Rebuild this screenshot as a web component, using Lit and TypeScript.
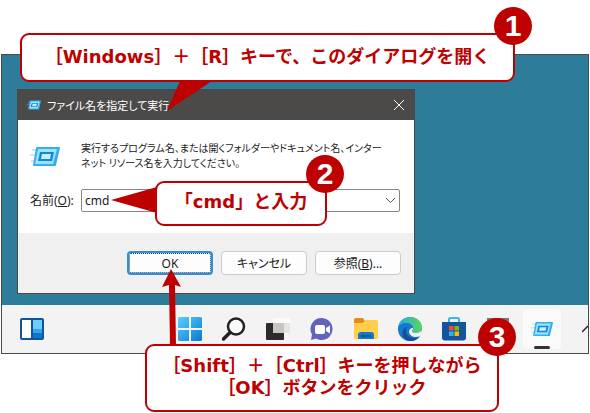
import { LitElement, html, css, svg } from "lit";
import { customElement, property } from "lit/decorators.js";

const runGlyph = svg`
  <path d="M2 4h7M0 9h7M1 15h5" stroke="#8fd0f5" stroke-width="1" />
  <path d="M7 1h22q1 0 1 1l-4 17q0 1-1 1H4q-1 0-1-1L6 2q0-1 1-1z" fill="#35aef0" />
  <path d="M8 3h19l-4 15H5z" fill="#9be3fc" />
  <path d="M10 6h14l-2 9H8z" fill="#1787d4" />
  <path d="M12 8h9l-1 5H11z" fill="#c4effd" />`;

@customElement("callout-box")
class CalloutBox extends LitElement {
  @property({ type: Number }) step = 1;

  static styles = css`
    :host {
      display: block;
      box-sizing: border-box;
      border: 2px solid #be0000;
      border-radius: 9px;
      background: #fff;
      color: #be0000;
      font: 700 18px/22px "DejaVu Sans", "Noto Sans CJK JP", sans-serif;
      text-align: center;
      white-space: nowrap;
    }
    .badge {
      position: absolute;
      top: -28px;
      right: -19px;
      width: 38px;
      height: 38px;
      border-radius: 50%;
      background: #be0000;
      color: #fff;
      font: 700 30px/38px "Liberation Sans", sans-serif;
    }
  `;

  render() {
    return html`<slot></slot><span class="badge">${this.step}</span>`;
  }
}

@customElement("run-dialog")
class RunDialog extends LitElement {
  static styles = css`
    :host {
      display: block;
      box-sizing: border-box;
      border: 1px solid #4a4846;
      background: #fff;
      color: #1b1b1b;
      font: 12px/15px "Noto Sans", "Noto Sans CJK JP", sans-serif;
      font-feature-settings: "palt";
    }
    .title {
      display: flex;
      align-items: center;
      gap: 6px;
      height: 30px;
      padding: 0 9px;
      background: #4c4a48;
      color: #fff;
    }
    .title h1 {
      flex: 1;
      margin: 0;
      font-size: 11px;
      font-weight: 400;
    }
    .close {
      display: flex;
      padding: 0;
      border: 0;
      background: none;
    }
    .body {
      display: grid;
      grid-template-columns: 51px 1fr;
      row-gap: 18px;
      align-items: center;
      padding: 21px 14px 21px 12px;
    }
    .body p {
      margin: 0;
      font-size: 10px;
      white-space: nowrap;
    }
    .combo {
      display: flex;
      box-sizing: border-box;
      height: 23px;
      border: 1px solid #868686;
      border-radius: 2px;
    }
    .combo input {
      flex: 1;
      min-width: 0;
      padding: 0 3px;
      border: 0;
      outline: 0;
      background: none;
      color: #1b1b1b;
      font: 12px/15px "Noto Sans", sans-serif;
    }
    .combo button {
      display: flex;
      align-items: center;
      padding: 0 3px;
      border: 0;
      background: none;
    }
    .foot {
      display: flex;
      justify-content: flex-end;
      gap: 8px;
      padding: 18px 13px;
      background: #f0f0f0;
    }
    .btn {
      width: 86px;
      height: 24px;
      padding: 0;
      border: 1px solid #cacaca;
      border-radius: 4px;
      background: #fdfdfd;
      color: #1b1b1b;
      font: 12px/15px "Noto Sans", "Noto Sans CJK JP", sans-serif;
      font-feature-settings: "palt";
    }
    .primary {
      border: 2px solid #2a8fdc;
      outline: 1px dotted #333;
      outline-offset: -3px;
    }
  `;

  render() {
    return html`
      <div class="title">
        <svg width="14" height="10" viewBox="0 0 30 21">${runGlyph}</svg>
        <h1>ファイル名を指定して実行</h1>
        <button class="close" aria-label="閉じる">
          <svg width="12" height="12" viewBox="0 0 12 12">
            <path d="M1 1l10 10M11 1L1 11" stroke="#fff" />
          </svg>
        </button>
      </div>
      <div class="body">
        <svg width="30" height="21" viewBox="0 0 30 21">${runGlyph}</svg>
        <p>実行するプログラム名、または開くフォルダーやドキュメント名、インター<br />ネット リソース名を入力してください。</p>
        <label for="name">名前(<u>O</u>):</label>
        <div class="combo">
          <input id="name" type="text" value="cmd" />
          <button aria-label="履歴">
            <svg width="11" height="7" viewBox="0 0 11 7">
              <path d="M1 1l4.500 4.500L10 1" fill="none" stroke="#555" />
            </svg>
          </button>
        </div>
      </div>
      <div class="foot">
        <button class="btn primary">OK</button>
        <button class="btn">キャンセル</button>
        <button class="btn">参照(<u>B</u>)...</button>
      </div>
    `;
  }
}

const icons = {
  widgets: svg`
    <rect x="0" y="1" width="24" height="22" rx="2" fill="#0e55a0" />
    <rect x="2" y="3" width="9" height="18" fill="#fff" />
    <rect x="13" y="3" width="9" height="9" fill="#6bcdf8" />
    <rect x="13" y="12" width="9" height="4" fill="#2fa3ec" />
    <rect x="13" y="16" width="9" height="5" fill="#1272ce" />`,
  start: svg`
    <linearGradient id="win" x1="0" y1="0" x2="1" y2="1">
      <stop offset="0" stop-color="#5bd0fa" /><stop offset="1" stop-color="#0878d4" />
    </linearGradient>
    <path d="M1.500 0H11v11H0V1.500Q0 0 1.500 0zM13 0h9.500Q24 0 24 1.500V11H13zM0 13h11v11H1.500Q0 24 0 22.500zM13 13h11v9.500q0 1.500-1.500 1.500H13z" fill="url(#win)" />`,
  search: svg`
    <circle cx="14" cy="9.500" r="8" fill="#fafafa" stroke="#222" stroke-width="2.500" />
    <path d="M8 15.500L1.500 22" stroke="#222" stroke-width="3.500" stroke-linecap="round" />`,
  tasks: svg`
    <rect x="0" y="6" width="18" height="17" rx="1" fill="#2b2b2b" />
    <rect x="7" y="1" width="17" height="15" rx="1" fill="#fbfbfb" />
    <rect x="7" y="6" width="11" height="10" fill="#c9c5c3" />
    <path d="M18 6h6v9q0 1-1 1h-5z" fill="#e4e4e4" />`,
  chat: svg`
    <path d="M12 1a11 11 0 1 1-6 20.500L1 23l1-5.500A11 11 0 0 1 12 1z" fill="#6264bb" />
    <rect x="5" y="8" width="10" height="9" rx="2" fill="#fff" />
    <path d="M16 11l4-2.500v8L16 14z" fill="#fff" />`,
  folder: svg`
    <path d="M0 2.500Q0 1 1.500 1H9l2 3v5H0z" fill="#e88a1a" />
    <path d="M0 6h9l2-3h11.500Q24 3 24 4.500v16q0 1.500-1.500 1.500h-21Q0 22 0 20.500z" fill="#ffcf4c" />
    <path d="M4 22v-4q0-3 3-3h10q3 0 3 3v4z" fill="#1278c8" />
    <path d="M7 19h10" stroke="#0c5699" stroke-width="2" />`,
  edge: svg`
    <linearGradient id="eg" x1="0" y1="0" x2="1" y2="0">
      <stop offset="0" stop-color="#28a9e6" /><stop offset="1" stop-color="#5bd55a" />
    </linearGradient>
    <circle cx="12" cy="12" r="12" fill="#1678cc" />
    <path d="M0 11C1 4 6 0 12 0c7 0 12 5 12 10 0 4-3 6-6 6-2 0-4-.5-4-2 0-1 1-1 1-3 0-3-3-5-7-5-4 0-7 2-8 5z" fill="url(#eg)" />
    <path d="M9 10c-3 5 1 11 7 11 3 0 5-1 6-2-2 3-5 5-10 5C6 24 3 18 5 13c1-2 3-3 4-3z" fill="#12509f" />
    <path d="M15 11c0 2-1 2-1 3 0 1.500 2 2 4 2 2.500 0 4.500-1 6-3 0 3-1 5-2 6-4 2-10 1-11-4 0-2 1-4 4-4z" fill="#f2f2f2" />`,
  store: svg`
    <path d="M7 6V2.500Q7 1 8.500 1h7Q17 1 17 2.500V6" fill="none" stroke="#37b5ee" stroke-width="2" />
    <path d="M0 5h24v15.500q0 3-3 3H3q-3 0-3-3z" fill="#14549e" />
    <path d="M7 9h4.500v4.500H7z" fill="#f25022" /><path d="M12.500 9H17v4.500h-4.500z" fill="#7fba00" />
    <path d="M7 14.500h4.500V19H7z" fill="#30aef0" /><path d="M12.500 14.500H17V19h-4.500z" fill="#ffb900" />`,
  window: svg`<rect x="1" y="1" width="22" height="22" fill="#77777b" />`,
};

@customElement("task-bar")
class TaskBar extends LitElement {
  static styles = css`
    :host {
      display: flex;
      align-items: center;
      height: 48px;
      padding-left: 8px;
      overflow: hidden;
      background: #f3f3f3;
    }
    button {
      display: flex;
      flex: none;
      align-items: center;
      justify-content: center;
      width: 44px;
      height: 40px;
      padding: 0;
      border: 0;
      background: none;
    }
    .apps {
      display: flex;
      margin-left: auto;
    }
    .active {
      flex-direction: column;
      justify-content: flex-end;
      gap: 9px;
      width: 38px;
      margin: 0 3px;
      border-radius: 4px;
      background: #fafafa;
    }
    .mark {
      width: 16px;
      height: 3px;
      border-radius: 2px;
      background: #333;
    }
    .tray {
      justify-content: flex-end;
      width: 24px;
    }
  `;

  icon(label: string, art: unknown) {
    return html`<button aria-label=${label}>
      <svg width="24" height="24" viewBox="0 0 24 24">${art}</svg>
    </button>`;
  }

  render() {
    return html`
      ${this.icon("ウィジェット", icons.widgets)}
      <div class="apps">
        ${this.icon("スタート", icons.start)}
        ${this.icon("検索", icons.search)}
        ${this.icon("タスク ビュー", icons.tasks)}
        ${this.icon("チャット", icons.chat)}
        ${this.icon("エクスプローラー", icons.folder)}
        ${this.icon("Edge", icons.edge)}
        ${this.icon("Store", icons.store)}
        ${this.icon("アプリ", icons.window)}
        <button class="active" aria-label="ファイル名を指定して実行">
          <svg width="22" height="16" viewBox="0 0 30 21">${runGlyph}</svg>
          <span class="mark"></span>
        </button>
      </div>
      <button class="tray" aria-label="その他">
        <svg width="6" height="8" viewBox="0 0 6 8">
          <path d="M0 7l6-6" stroke="#222" stroke-width="1.500" />
        </svg>
      </button>
    `;
  }
}

@customElement("app-root")
class AppRoot extends LitElement {
  static styles = css`
    :host {
      display: block;
      position: relative;
      box-sizing: border-box;
      min-height: 100vh;
      padding: 54px 1px 0;
      overflow: hidden;
      background: #fff;
    }
    .screen {
      border: 1px solid #4a4a4a;
      background: #2d7d9a;
    }
    .desktop {
      padding: 34px 15px 11px;
    }
    run-dialog {
      max-width: 398px;
    }
    callout-box {
      position: absolute;
    }
    .open {
      top: 33px;
      left: 20px;
      width: 495px;
      padding: 11px 0 12px;
    }
    .type {
      top: 181px;
      left: 155px;
      width: 172px;
      padding: 8px 0 11px;
    }
    .press {
      top: 344px;
      left: 145px;
      width: 354px;
      padding: 9px 0 11px;
    }
    .pointers {
      position: absolute;
      top: 0;
      left: 0;
      fill: #be0000;
      pointer-events: none;
    }
  `;

  render() {
    return html`
      <div class="screen">
        <div class="desktop"><run-dialog></run-dialog></div>
        <task-bar></task-bar>
      </div>
      <svg class="pointers" width="220" height="350" viewBox="0 0 220 350">
        <path d="M180 81h32L167 111z" />
        <path d="M157 187v26L111 200z" />
        <path d="M171 269l10 18-6-2 1 61h-6l-1-61-7 2z" />
      </svg>
      <callout-box class="open" step="1">［Windows］＋［R］キーで、このダイアログを開く</callout-box>
      <callout-box class="type" step="2">「cmd」と入力</callout-box>
      <callout-box class="press" step="3">［Shift］＋［Ctrl］キーを押しながら<br />［OK］ボタンをクリック</callout-box>
    `;
  }
}
